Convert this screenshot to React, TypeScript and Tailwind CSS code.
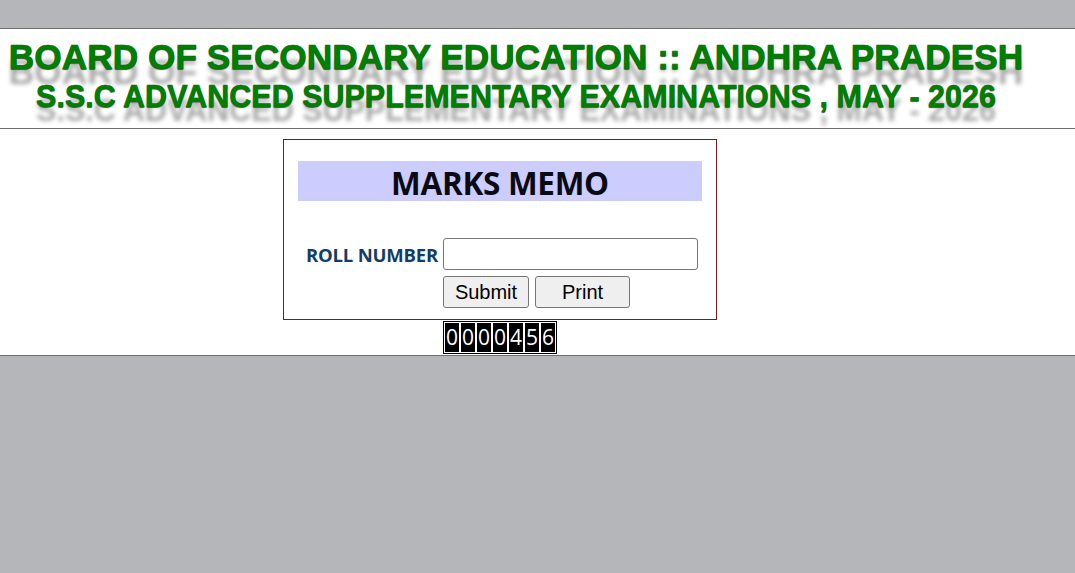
export default function App() {
  const digits = "0000456".split("");

  return (
    <div className="min-h-[573px] bg-[#b5b6ba] flex flex-col">
      <div className="h-[28px]" />

      {/* cabecalho */}
      <header className="h-[101px] bg-white border-y border-[#6e6e6e] font-['Liberation_Sans',Arial,sans-serif] font-bold text-[#008000]">
        <div className="w-[1032px] text-center">
          <h1
            className="text-[35.3px] leading-[38px] pt-[9px]"
            style={{
              WebkitTextStroke: "0.6px #007000",
              textShadow: "0 1px 1px #555, 0 15px 4px #aaa",
            }}
          >
            BOARD OF SECONDARY EDUCATION :: ANDHRA PRADESH
          </h1>
          <h2
            className="text-[30.5px] leading-[36px] pt-[2px]"
            style={{
              WebkitTextStroke: "0.5px #007000",
              textShadow: "0 1px 1px #555, 0 14px 4px #aaa",
            }}
          >
            S.S.C ADVANCED SUPPLEMENTARY EXAMINATIONS , MAY - 2026
          </h2>
        </div>
      </header>

      {/* formulario */}
      <main className="h-[227px] bg-white border-b border-[#6e6e6e] pt-[10px]">
        <div className="w-[1000px] flex flex-col items-center">
          <div className="w-[434px] h-[181px] border border-[#7a1a1a] px-[14px] pt-[21px]">
            <div className="h-[40px] bg-[#ccccff] flex items-center justify-center pt-[3px]">
              <span className="font-['Open_Sans',sans-serif] font-bold text-[31.5px] text-[#0a0a14] tracking-[-0.3px]">
                MARKS MEMO
              </span>
            </div>
            <div className="mt-[37px] flex items-center gap-[5px]">
              <span className="w-[140px] text-right font-['Open_Sans',sans-serif] font-bold text-[18.5px] text-[#123c69] tracking-[-0.2px] pt-[2px]">
                ROLL NUMBER
              </span>
              <input
                type="text"
                className="w-[255px] h-[32px] border border-[#767676] rounded-[3px] bg-white"
              />
            </div>
            <div className="mt-[6px] ml-[145px] flex gap-[6px] font-['Liberation_Sans',Arial,sans-serif] text-[20px] text-black">
              <button className="w-[86px] h-[32px] bg-[#efefef] border border-[#767676] rounded-[3px]">
                Submit
              </button>
              <button className="w-[95px] h-[32px] bg-[#efefef] border border-[#767676] rounded-[3px]">
                Print
              </button>
            </div>
          </div>
          <div className="mt-[1px] flex bg-black border border-black">
            {digits.map((d, i) => (
              <span
                key={i}
                className="w-[16px] h-[31px] border border-white bg-black text-white flex items-center justify-center font-['Open_Sans',sans-serif] text-[21px]"
              >
                {d}
              </span>
            ))}
          </div>
        </div>
      </main>

      <div className="flex-1" />
    </div>
  );
}
